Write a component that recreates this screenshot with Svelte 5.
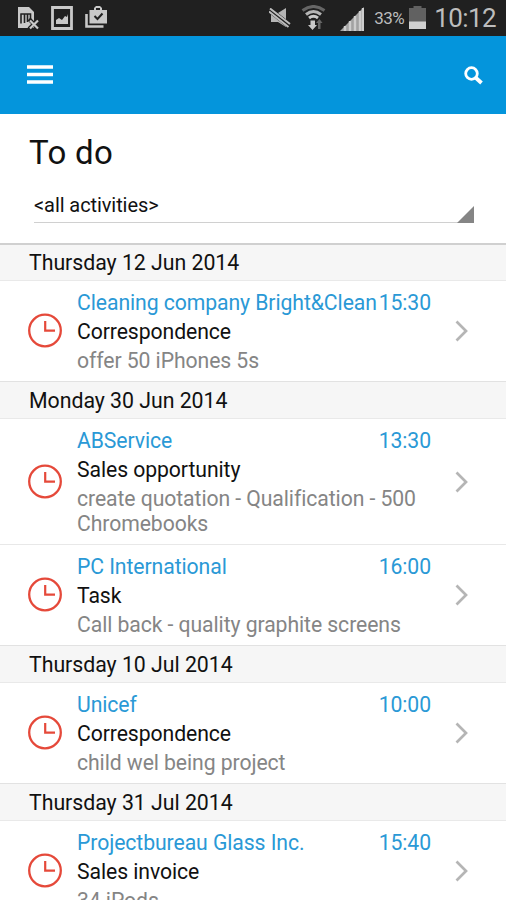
<script lang="ts">
  interface Activity {
    company: string;
    time: string;
    type: string;
    description: string;
  }

  interface Day {
    date: string;
    activities: Activity[];
  }

  const days: Day[] = [
    {
      date: 'Thursday 12 Jun 2014',
      activities: [
        { company: 'Cleaning company Bright&Clean', time: '15:30', type: 'Correspondence', description: 'offer 50 iPhones 5s' },
      ],
    },
    {
      date: 'Monday 30 Jun 2014',
      activities: [
        { company: 'ABService', time: '13:30', type: 'Sales opportunity', description: 'create quotation - Qualification - 500 Chromebooks' },
        { company: 'PC International', time: '16:00', type: 'Task', description: 'Call back - quality graphite screens' },
      ],
    },
    {
      date: 'Thursday 10 Jul 2014',
      activities: [
        { company: 'Unicef', time: '10:00', type: 'Correspondence', description: 'child wel being project' },
      ],
    },
    {
      date: 'Thursday 31 Jul 2014',
      activities: [
        { company: 'Projectbureau Glass Inc.', time: '15:40', type: 'Sales invoice', description: '34 iPods' },
      ],
    },
  ];
</script>

<div class="screen">
  <div class="status-bar">
    <div class="notifications">
      <svg width="22" height="26" viewBox="0 0 22 26">
        <path d="M1 2h11l5 5v16H1z" fill="#c9c9c9" />
        <path d="M4 8.500v10M3.500 9h10v6M7.500 9v9M10.500 9v8" fill="none" stroke="#222" stroke-width="1.600" />
        <path d="M12 14l10 10M22 14L12 24" stroke="#202020" stroke-width="4" />
        <path d="M13 15.500l8 8M21 15.500l-8 8" stroke="#c9c9c9" stroke-width="2.200" />
      </svg>
      <svg width="22" height="26" viewBox="0 0 22 26">
        <path d="M1.500 2.500h19v21h-19z" fill="none" stroke="#c9c9c9" stroke-width="2.800" />
        <path d="M5 19v-4l3-2 3 2 3-4 2 1 1-3v10z" fill="#c9c9c9" />
      </svg>
      <svg width="23" height="26" viewBox="0 0 23 26">
        <path d="M1.500 9v12.500h17" fill="none" stroke="#c9c9c9" stroke-width="2.600" />
        <path d="M4.500 5H9V3l2-2h4l2 2v2h5v13.500H4.500zM11 5h4V3h-4z" fill="#c9c9c9" fill-rule="evenodd" />
        <path d="M9.500 11l3 3 5-5.500" fill="none" stroke="#222" stroke-width="2" />
      </svg>
    </div>
    <div class="indicators">
      <svg class="mute" width="23" height="22" viewBox="0 0 23 22">
        <path d="M2 5h7l8-5v19l-8-5H2z" fill="#b5b5b5" />
        <path d="M0 1.500L21 18" stroke="#202020" stroke-width="5.600" />
        <path d="M1 .5l20 15.500M0 3.500l19.500 15.500" stroke="#bdbdbd" stroke-width="2" />
      </svg>
      <svg class="wifi" width="26" height="26" viewBox="0 0 26 26">
        <g fill="none" stroke-width="3">
          <path d="M1.500 5.500q11-8 22 0" stroke="#666" />
          <path d="M5 9.500q7.500-6 15 0" stroke="#b5b5b5" />
          <path d="M8 13q4.500-3.500 9 0" stroke="#c9c9c9" />
        </g>
        <path d="M9.500 15.500h4.500V20h2l-4.500 5L7 20h2.500z" fill="#c9c9c9" />
        <path d="M17 24v-6h-2l3.500-4 3 4h-2v6z" fill="#666" />
      </svg>
      <svg class="signal" width="24" height="24" viewBox="0 0 24 24">
        <path d="M0 24L24 0v24z" fill="#a2a2a2" />
        <path d="M5 24v-5M10 24V14M15 24V9M20 24V4M23 24V1" stroke="#cdcdcd" stroke-width="2.400" />
      </svg>
      <span class="percent">33%</span>
      <svg class="battery" width="17" height="23" viewBox="0 0 17 23">
        <path d="M4.500 0h8v2H17v21H0V2h4.500z" fill="#616161" />
        <path d="M0 15.500h17V23H0z" fill="#d0d0d0" />
      </svg>
      <span class="clock">10:12</span>
    </div>
  </div>

  <header class="app-bar">
    <svg width="26" height="20" viewBox="0 0 26 20">
      <path d="M0 2h26M0 9.500h26M0 17h26" stroke="#fff" stroke-width="3.600" />
    </svg>
    <svg width="19" height="19" viewBox="0 0 19 19">
      <circle cx="7.500" cy="7.500" r="5.800" fill="none" stroke="#fff" stroke-width="2.800" />
      <path d="M11.500 11.500l6 5.500" stroke="#fff" stroke-width="3.800" />
    </svg>
  </header>

  <div class="filter">
    <h1>To do</h1>
    <div class="spinner">
      <span>&lt;all activities&gt;</span>
      <svg width="17" height="17" viewBox="0 0 17 17">
        <path d="M17 0v17H0z" fill="#858585" />
      </svg>
    </div>
  </div>

  {#each days as day}
    <section>
      <h2>{day.date}</h2>
      {#each day.activities as activity}
        <div class="activity">
          <svg width="36" height="36" viewBox="0 0 36 36">
            <g fill="none" stroke="#e5493a">
              <circle cx="18" cy="17.500" r="15.800" stroke-width="2.300" />
              <path d="M18.200 8v9.700H28" stroke-width="2.200" />
            </g>
          </svg>
          <div class="details">
            <div class="top-line">
              <span>{activity.company}</span>
              <span>{activity.time}</span>
            </div>
            <div class="type">{activity.type}</div>
            <div class="description">{activity.description}</div>
          </div>
          <svg class="chevron" width="14" height="22" viewBox="0 0 14 22">
            <path d="M1.500 1.500L11 11l-9.500 9.500" fill="none" stroke="#b5b5b5" stroke-width="2.700" />
          </svg>
        </div>
      {/each}
    </section>
  {/each}
</div>

<style>
  :global(body) {
    background: #fff;
  }

  .screen {
    height: 900px;
    overflow: hidden;
    background: #fff;
    color: #111;
    font-family: Roboto, sans-serif;
    font-size: 21.2px;
    letter-spacing: -0.08px;
  }

  .status-bar {
    display: flex;
    justify-content: space-between;
    box-sizing: border-box;
    height: 36px;
    padding: 0 10px 0 17px;
    background: #202020;
    color: #bdbdbd;
  }

  .notifications {
    display: flex;
    gap: 12px;
    padding-top: 5px;
  }

  .indicators {
    display: flex;
    align-items: flex-start;
  }

  .mute {
    margin: 8px 9px 0 0;
  }

  .wifi {
    margin: 5px 13px 0 0;
  }

  .signal {
    margin: 7px 10px 0 0;
  }

  .percent {
    width: 34px;
    font-size: 17px;
    line-height: 37px;
    letter-spacing: -0.6px;
  }

  .battery {
    margin: 6px 8px 0 1px;
  }

  .clock {
    font-size: 26px;
    line-height: 36px;
    letter-spacing: -0.6px;
  }

  .app-bar {
    display: flex;
    align-items: center;
    justify-content: space-between;
    box-sizing: border-box;
    height: 78px;
    padding: 0 23px 0 27px;
    background: #0495dc;
  }

  .filter {
    box-sizing: border-box;
    height: 129px;
    padding: 18px 32px 0 29px;
  }

  h1 {
    margin: 0;
    font-size: 33px;
    font-weight: 400;
    line-height: 42px;
    letter-spacing: 0.3px;
  }

  .spinner {
    display: flex;
    align-items: flex-end;
    justify-content: space-between;
    box-sizing: border-box;
    height: 40px;
    margin: 9px 0 0 5px;
    border-bottom: 1px solid #d0d0d0;
    font-size: 20px;
    line-height: 34px;
  }

  .spinner svg {
    margin-bottom: -1px;
  }

  h2 {
    box-sizing: border-box;
    height: 38px;
    margin: 0;
    padding-left: 29px;
    border-top: 1px solid #e2e2e2;
    border-bottom: 1px solid #e9e9e9;
    background: #f6f6f6;
    font-size: 21.3px;
    font-weight: 400;
    letter-spacing: -0.03px;
    line-height: 37px;
  }

  section:first-of-type h2 {
    border-top: 2px solid #d0d0d0;
    line-height: 35px;
  }

  .activity {
    display: flex;
    align-items: center;
    padding: 7px 37px 7px 27px;
  }

  .activity + .activity {
    border-top: 1px solid #e8e8e8;
  }

  .details {
    width: 354px;
    margin: 0 24px 0 14px;
  }

  .top-line {
    display: flex;
    justify-content: space-between;
    color: #2a99d6;
    line-height: 29px;
    white-space: nowrap;
  }

  .type {
    line-height: 29px;
  }

  .description {
    padding: 2px 0 1px;
    color: #858585;
    line-height: 25px;
  }
</style>
